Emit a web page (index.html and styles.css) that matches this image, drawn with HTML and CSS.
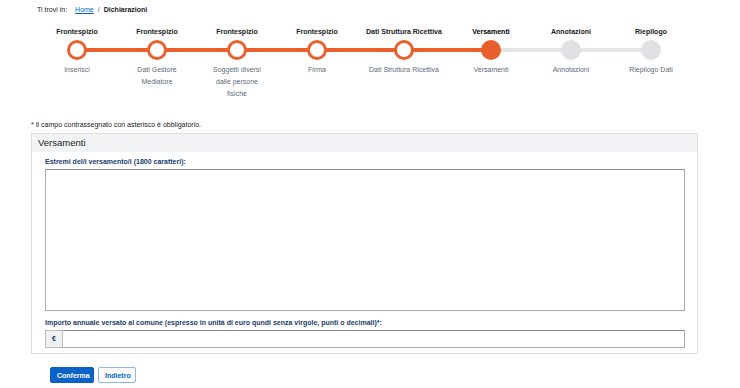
FILE: index.html
```html
<!DOCTYPE html>
<html lang="it">

<head>
  <meta charset="UTF-8" />
  <meta name="viewport" content="width=device-width, initial-scale=1.0" />
  <title>Dichiarazioni - Versamenti</title>
  <link rel="stylesheet" href="styles.css">
</head>

<body>
  <nav class="breadcrumb">
    <span class="crumb-label">Ti trovi in:</span>
    <a href="#" class="crumb-link">Home</a>
    <span class="crumb-sep">/</span>
    <span class="crumb-current">Dichiarazioni</span>
  </nav>

  <ol class="stepper">
    <li class="step done">
      <div class="step-title">Frontespizio</div>
      <div class="step-track"><span class="step-dot"></span></div>
      <div class="step-sub">Inserisci</div>
    </li>
    <li class="step done">
      <div class="step-title">Frontespizio</div>
      <div class="step-track"><span class="step-dot"></span></div>
      <div class="step-sub">Dati Gestore Mediatore</div>
    </li>
    <li class="step done">
      <div class="step-title">Frontespizio</div>
      <div class="step-track"><span class="step-dot"></span></div>
      <div class="step-sub">Soggetti diversi dalle persone fisiche</div>
    </li>
    <li class="step done">
      <div class="step-title">Frontespizio</div>
      <div class="step-track"><span class="step-dot"></span></div>
      <div class="step-sub">Firma</div>
    </li>
    <li class="step done wide">
      <div class="step-title">Dati Struttura Ricettiva</div>
      <div class="step-track"><span class="step-dot"></span></div>
      <div class="step-sub">Dati Struttura Ricettiva</div>
    </li>
    <li class="step current">
      <div class="step-title">Versamenti</div>
      <div class="step-track"><span class="step-dot"></span></div>
      <div class="step-sub">Versamenti</div>
    </li>
    <li class="step">
      <div class="step-title">Annotazioni</div>
      <div class="step-track"><span class="step-dot"></span></div>
      <div class="step-sub">Annotazioni</div>
    </li>
    <li class="step">
      <div class="step-title">Riepilogo</div>
      <div class="step-track"><span class="step-dot"></span></div>
      <div class="step-sub">Riepilogo Dati</div>
    </li>
  </ol>

  <p class="form-note">* Il campo contrassegnato con asterisco è obbligatorio.</p>

  <form class="panel">
    <div class="panel-head">Versamenti</div>
    <div class="panel-body">
      <label class="field-label" for="estremi">Estremi del/i versamento/i (1800 caratteri):</label>
      <textarea id="estremi" class="field-area" maxlength="1800"></textarea>

      <label class="field-label field-gap" for="importo">Importo annuale versato al comune (espresso in unità di euro qundi senza virgole, punti o decimali)*:</label>
      <div class="input-group">
        <span class="addon">€</span>
        <input id="importo" class="field-input" type="text">
      </div>
    </div>
  </form>

  <div class="actions">
    <button class="btn btn-primary" type="button">Conferma</button>
    <button class="btn btn-outline" type="button">Indietro</button>
  </div>
</body>

</html>
```

FILE: styles.css
```css
body {
  margin: 0;
  font-family: "Liberation Sans", Arial, sans-serif;
  color: #1c1c1c;
  background: #fff;
}

.breadcrumb {
  display: flex;
  padding: 5px 0 0 37px;
  font-size: 7px;
  line-height: 10px;
}

.crumb-label {
  margin-right: 8px;
}

.crumb-link {
  color: #0066cc;
}

.crumb-sep {
  margin: 0 4px;
  color: #555;
}

.crumb-current {
  font-weight: bold;
}

.stepper {
  display: flex;
  list-style: none;
  margin: 12px 0 0;
  padding: 0 0 0 37px;
}

.step {
  flex: 0 0 80px;
  display: flex;
  flex-direction: column;
  align-items: center;
  text-align: center;
}

.step.wide {
  flex-basis: 94px;
}

.step-title {
  font-size: 7px;
  font-weight: bold;
  line-height: 10px;
  white-space: nowrap;
  color: #222;
}

.current .step-title {
  color: #000;
}

.step-track {
  position: relative;
  align-self: stretch;
  display: flex;
  justify-content: center;
  height: 20px;
  margin: 3px 0 4px;
}

.step-track::before,
.step-track::after {
  content: "";
  position: absolute;
  top: 8px;
  width: 50%;
  height: 4px;
  background: #e3e4e6;
}

.step-track::before {
  left: 0;
}

.step-track::after {
  right: 0;
}

.step:first-child .step-track::before,
.step:last-child .step-track::after {
  display: none;
}

.done .step-track::before,
.done .step-track::after,
.current .step-track::before {
  background: #e8602c;
}

.step-dot {
  position: relative;
  z-index: 1;
  width: 20px;
  height: 20px;
  box-sizing: border-box;
  border-radius: 50%;
  background: #e0e1e3;
}

.done .step-dot {
  background: #fff;
  border: 3px solid #e8602c;
}

.current .step-dot {
  background: #e8602c;
}

.step-sub {
  padding: 0 10px;
  font-size: 7px;
  line-height: 12px;
  color: #5e6b78;
}

.wide .step-sub {
  padding: 0;
}

.form-note {
  margin: 20px 0 0 31px;
  font-size: 7px;
  line-height: 10px;
}

.panel {
  width: 667px;
  margin: 3px 0 0 31px;
  box-sizing: border-box;
  border: 1px solid #dcdddf;
}

.panel-head {
  height: 18px;
  padding-left: 6px;
  background: #f2f3f5;
  font-size: 9.5px;
  line-height: 18px;
  color: #1a1a1a;
}

.panel-body {
  padding: 5px 12px 5px 13px;
}

.field-label {
  display: block;
  margin-bottom: 3px;
  font-size: 7px;
  font-weight: bold;
  line-height: 9px;
  color: #1a3d6e;
}

.field-gap {
  margin-top: 7px;
}

.field-area {
  display: block;
  width: 100%;
  height: 142px;
  margin: 0;
  box-sizing: border-box;
  border: 1px solid #ababab;
  border-top-color: #8f8f8f;
  resize: none;
}

.input-group {
  display: flex;
  height: 18px;
}

.addon {
  width: 18px;
  box-sizing: border-box;
  border: 1px solid #bcbcbc;
  background: #eff0f1;
  font-size: 7px;
  font-weight: bold;
  line-height: 16px;
  text-align: center;
  color: #1a3d6e;
}

.field-input {
  flex: 1;
  margin: 0;
  padding: 0 4px;
  box-sizing: border-box;
  border: 1px solid #ababab;
  border-left: none;
  border-top-color: #8f8f8f;
}

.actions {
  display: flex;
  gap: 4px;
  margin: 13px 0 0 50px;
}

.btn {
  height: 16px;
  padding: 0 6px;
  border-radius: 2px;
  font-family: inherit;
  font-size: 7px;
  font-weight: bold;
  cursor: pointer;
}

.btn-primary {
  width: 44px;
  border: 1px solid #0a5fbf;
  background: #0b63c9;
  color: #fff;
}

.btn-outline {
  width: 38px;
  border: 1px solid #8db7ea;
  background: #fff;
  color: #0066cc;
}
```
